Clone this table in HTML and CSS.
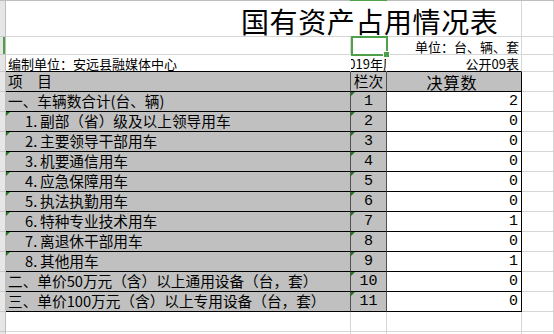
FILE: index.html
```html
<!DOCTYPE html>
<html lang="zh-CN">
<head>
<meta charset="utf-8">
<title>国有资产占用情况表</title>
<link rel="stylesheet" href="styles.css">
</head>
<body>
<div class="sheet">
  <div class="colhead"><div class="ch"></div><div class="ch ch-sel"></div><div class="ch"></div></div>

  <div class="row r-title">
    <div class="c rh"></div>
    <div class="c title">国有资产占用情况表</div>
    <div class="c"></div>
  </div>

  <div class="row r-unit">
    <div class="c rh rh-sel"></div>
    <div class="c"></div>
    <div class="c selcell"><div class="sel"><span class="handle"></span></div></div>
    <div class="c small right">单位：台、辆、套</div>
    <div class="c"></div>
  </div>

  <div class="row r-org">
    <div class="c rh"></div>
    <div class="c small bb noline">编制单位：安远县融媒体中心</div>
    <div class="c small bb noline center clip">2019年度</div>
    <div class="c small bb right">公开09表</div>
    <div class="c"></div>
  </div>

  <div class="row r-data">
    <div class="c rh"></div>
    <div class="c ga">项　目</div>
    <div class="c gb center">栏次</div>
    <div class="c gc-head center"><span class="big">决算数</span></div>
    <div class="c"></div>
  </div>

  <div class="row r-data">
    <div class="c rh"></div>
    <div class="c ga">一、车辆数合计(台、辆)</div>
    <div class="c gb center num tri">1</div>
    <div class="c gc right num">2</div>
    <div class="c"></div>
  </div>
  <div class="row r-data">
    <div class="c rh"></div>
    <div class="c ga tri indent"><span class="no">1.</span>副部（省）级及以上领导用车</div>
    <div class="c gb center num tri">2</div>
    <div class="c gc right num">0</div>
    <div class="c"></div>
  </div>
  <div class="row r-data">
    <div class="c rh"></div>
    <div class="c ga tri indent"><span class="no">2.</span>主要领导干部用车</div>
    <div class="c gb center num tri">3</div>
    <div class="c gc right num">0</div>
    <div class="c"></div>
  </div>
  <div class="row r-data">
    <div class="c rh"></div>
    <div class="c ga tri indent"><span class="no">3.</span>机要通信用车</div>
    <div class="c gb center num tri">4</div>
    <div class="c gc right num">0</div>
    <div class="c"></div>
  </div>
  <div class="row r-data">
    <div class="c rh"></div>
    <div class="c ga tri indent"><span class="no">4.</span>应急保障用车</div>
    <div class="c gb center num tri">5</div>
    <div class="c gc right num">0</div>
    <div class="c"></div>
  </div>
  <div class="row r-data">
    <div class="c rh"></div>
    <div class="c ga tri indent"><span class="no">5.</span>执法执勤用车</div>
    <div class="c gb center num tri">6</div>
    <div class="c gc right num">0</div>
    <div class="c"></div>
  </div>
  <div class="row r-data">
    <div class="c rh"></div>
    <div class="c ga tri indent"><span class="no">6.</span>特种专业技术用车</div>
    <div class="c gb center num tri">7</div>
    <div class="c gc right num">1</div>
    <div class="c"></div>
  </div>
  <div class="row r-data">
    <div class="c rh"></div>
    <div class="c ga tri indent"><span class="no">7.</span>离退休干部用车</div>
    <div class="c gb center num tri">8</div>
    <div class="c gc right num">0</div>
    <div class="c"></div>
  </div>
  <div class="row r-data">
    <div class="c rh"></div>
    <div class="c ga tri indent"><span class="no">8.</span>其他用车</div>
    <div class="c gb center num tri">9</div>
    <div class="c gc right num">1</div>
    <div class="c"></div>
  </div>
  <div class="row r-data">
    <div class="c rh"></div>
    <div class="c ga">二、单价50万元（含）以上通用设备（台，套）</div>
    <div class="c gb center num tri">10</div>
    <div class="c gc right num">0</div>
    <div class="c"></div>
  </div>
  <div class="row r-data">
    <div class="c rh"></div>
    <div class="c ga">三、单价100万元（含）以上专用设备（台，套）</div>
    <div class="c gb center num tri">11</div>
    <div class="c gc right num">0</div>
    <div class="c"></div>
  </div>

  <div class="row r-data">
    <div class="c rh"></div>
    <div class="c"></div>
    <div class="c"></div>
    <div class="c"></div>
    <div class="c"></div>
  </div>
  <div class="row r-end">
    <div class="c rh"></div>
    <div class="c"></div>
    <div class="c"></div>
    <div class="c"></div>
    <div class="c"></div>
  </div>
</div>
</body>
</html>
```
FILE: styles.css
```css
* { box-sizing: border-box; margin: 0; padding: 0; }
html, body { width: 554px; height: 334px; overflow: hidden; background: #fff; }
body {
  font-family: "Noto Sans CJK SC", "Noto Sans", sans-serif;
  color: #000;
  font-size: 14.67px;
}
.sheet { width: 554px; }

.colhead {
  height: 1px;
  display: grid;
  grid-template-columns: 350px 37px 1fr;
  background: #bdbdbd;
}
.ch-sel { background: #4fa04a; }

.row {
  display: grid;
  grid-template-columns: 6px 345px 36px 135px 32px;
}
.r-title { height: 36px; grid-template-columns: 6px 516px 32px; }
.r-unit { height: 18px; }
.r-org { height: 17px; }
.r-data { height: 20px; }
.r-end { height: 2px; }
.r-end .c { border-bottom: 0; }

.c {
  position: relative;
  display: flex;
  align-items: center;
  white-space: nowrap;
  border-right: 1px solid #d6d6d6;
  border-bottom: 1px solid #d6d6d6;
  line-height: 1;
  padding: 0 2px;
}
.clip { overflow: hidden; }
.rh {
  padding: 0;
  background: #e6e6e6;
  border-right-color: #bdbdbd;
  border-bottom-color: #c9c9c9;
}
.rh-sel { box-shadow: inset -2px 0 0 #4fa04a; }

.title {
  font-size: 28px;
  letter-spacing: 0.6px;
  padding-left: 235px;
  padding-top: 4px;
  font-weight: 400;
}

.small { font-size: 13px; align-items: flex-end; padding-bottom: 1px; }
.right { justify-content: flex-end; }
.center { justify-content: center; }
.small.right { padding-right: 2px; }
.noline { border-right-color: transparent; }
.bb { border-bottom-color: #000; }

.sel {
  position: absolute;
  left: 0;
  top: -1px;
  width: 37px;
  height: 20px;
  border: 2px solid #4fa04a;
  z-index: 2;
}
.handle {
  position: absolute;
  right: -4px;
  bottom: -4px;
  width: 7px;
  height: 7px;
  background: #4fa04a;
  border: 1px solid #fff;
}

.ga, .gb {
  background: #c0c0c0;
  border-right-color: #505050;
  border-bottom-color: #000;
}
.gc {
  border-right-color: #000;
  border-bottom-color: #000;
  padding-right: 3px;
}
.gc-head {
  background: #c0c0c0;
  border-right-color: #000;
  border-bottom-color: #000;
  padding-right: 6px;
}
.big { font-size: 16px; letter-spacing: 1px; }
.indent { padding-left: 19px; }
.no { display: inline-block; width: 15px; }

.num { font-family: "Liberation Mono", monospace; font-size: 15px; }

.tri::before {
  content: "";
  position: absolute;
  top: 0;
  left: 0;
  border-top: 4px solid #1e7a1e;
  border-right: 4px solid transparent;
}
```
